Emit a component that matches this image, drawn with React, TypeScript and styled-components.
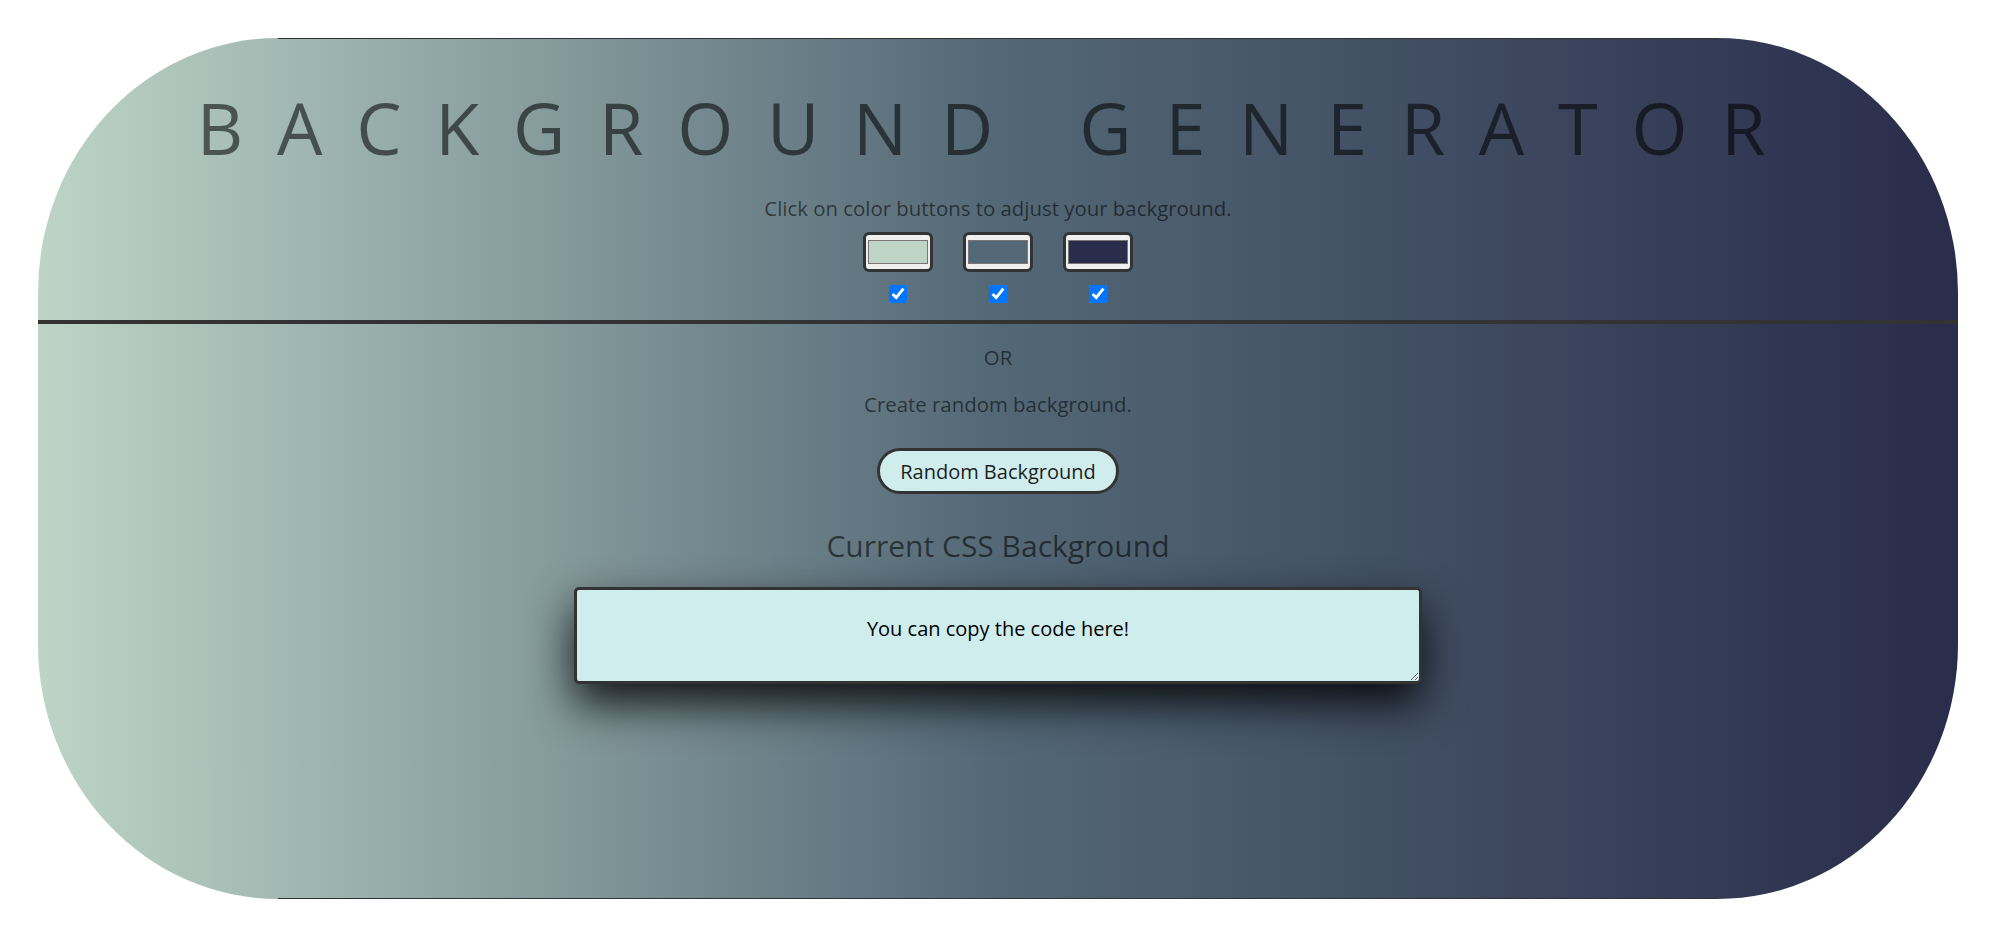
import React, { useState } from 'react';
import styled, { createGlobalStyle } from 'styled-components';

const GlobalStyle = createGlobalStyle`
  html, body {
    margin: 0;
    padding: 0;
    background: #ffffff;
  }
  body {
    font-family: "Open Sans", "Liberation Sans", sans-serif;
  }
`;

// the thin dark edge only runs along the straight top and bottom sides
const edgeLine = 'linear-gradient(#333, #333)';

const Card = styled.div<{ $gradient: string }>`
  margin: 38px;
  height: 861px;
  box-sizing: border-box;
  border-radius: 240px / 255px;
  background:
    ${edgeLine} top center / calc(100% - 480px) 1px no-repeat,
    ${edgeLine} bottom center / calc(100% - 480px) 1px no-repeat,
    ${p => p.$gradient};
  display: flex;
  flex-direction: column;
  align-items: center;
  text-align: center;
  overflow: hidden;
`;

const Title = styled.h1`
  margin: 40px 0 0;
  font-size: 72px;
  font-weight: 400;
  line-height: 98px;
  letter-spacing: 33.7px;
  color: rgba(0, 0, 0, 0.56);
`;

const Text = styled.p<{ $top: number }>`
  margin: ${p => p.$top}px 0 0;
  font-size: 20.4px;
  line-height: 27px;
  color: rgba(0, 0, 0, 0.56);
`;

const Pickers = styled.div`
  display: flex;
  gap: 30px;
  margin-top: 10px;
`;

const PickerColumn = styled.div`
  display: flex;
  flex-direction: column;
  align-items: center;
  gap: 13px;
`;

const ColorInput = styled.input.attrs({ type: 'color' })`
  width: 70px;
  height: 40px;
  box-sizing: border-box;
  margin: 0;
  padding: 0;
  border: 3px solid #333;
  border-radius: 6px;
  background: #efefef;
  cursor: pointer;

  &::-webkit-color-swatch-wrapper {
    padding: 5px 2px;
  }
  &::-webkit-color-swatch {
    border: 1px solid #777;
    border-radius: 0;
  }
`;

const Check = styled.input.attrs({ type: 'checkbox' })`
  width: 18px;
  height: 18px;
  margin: 0;
`;

const Divider = styled.div`
  align-self: stretch;
  height: 4px;
  margin-top: 17px;
  background: #333;
`;

const RandomButton = styled.button`
  margin-top: 30px;
  height: 46px;
  padding: 0 20px;
  border: 3px solid #333;
  border-radius: 23px;
  background: #d0eded;
  color: #1e1e1e;
  font-family: "Open Sans", "Liberation Sans", sans-serif;
  font-size: 20px;
  cursor: pointer;
`;

const SubHeading = styled.h3`
  margin: 30px 0 0;
  font-size: 30px;
  font-weight: 400;
  line-height: 44px;
  color: rgba(0, 0, 0, 0.56);
`;

const CodeBox = styled.textarea`
  margin-top: 19px;
  width: 848px;
  height: 97px;
  box-sizing: border-box;
  padding: 25px 10px 0;
  border: 3px solid #333;
  border-radius: 5px;
  background: #d0eded;
  color: #000;
  font-family: "Open Sans", "Liberation Sans", sans-serif;
  font-size: 20px;
  text-align: center;
  box-shadow: 0 20px 44px rgba(0, 0, 0, 0.85);
  outline: none;
`;

const randomHex = () =>
  '#' + Math.floor(Math.random() * 0xffffff).toString(16).padStart(6, '0');

const App: React.FC = () => {
  const [colors, setColors] = useState<string[]>(['#bdd4c7', '#536876', '#292c4a']);
  const [enabled, setEnabled] = useState<boolean[]>([true, true, true]);

  const active = colors.filter((_, i) => enabled[i]);
  const gradient =
    active.length > 1 ? `linear-gradient(to right, ${active.join(', ')})` : active[0] || '#fff';

  const setColor = (i: number, value: string) => {
    setColors(colors.map((c, j) => (j === i ? value : c)));
  };

  const toggle = (i: number) => {
    setEnabled(enabled.map((e, j) => (j === i ? !e : e)));
  };

  return (
    <>
      <GlobalStyle />
      <Card $gradient={gradient}>
        <Title>BACKGROUND GENERATOR</Title>
        <Text $top={19}>Click on color buttons to adjust your background.</Text>
        <Pickers>
          {colors.map((c, i) => (
            <PickerColumn key={i}>
              <ColorInput value={c} onChange={e => setColor(i, e.target.value)} />
              <Check checked={enabled[i]} onChange={() => toggle(i)} />
            </PickerColumn>
          ))}
        </Pickers>
        <Divider />
        <Text $top={20}>OR</Text>
        <Text $top={20}>Create random background.</Text>
        <RandomButton onClick={() => setColors(colors.map(() => randomHex()))}>
          Random Background
        </RandomButton>
        <SubHeading>Current CSS Background</SubHeading>
        <CodeBox defaultValue="You can copy the code here!" />
      </Card>
    </>
  );
};

export default App;
